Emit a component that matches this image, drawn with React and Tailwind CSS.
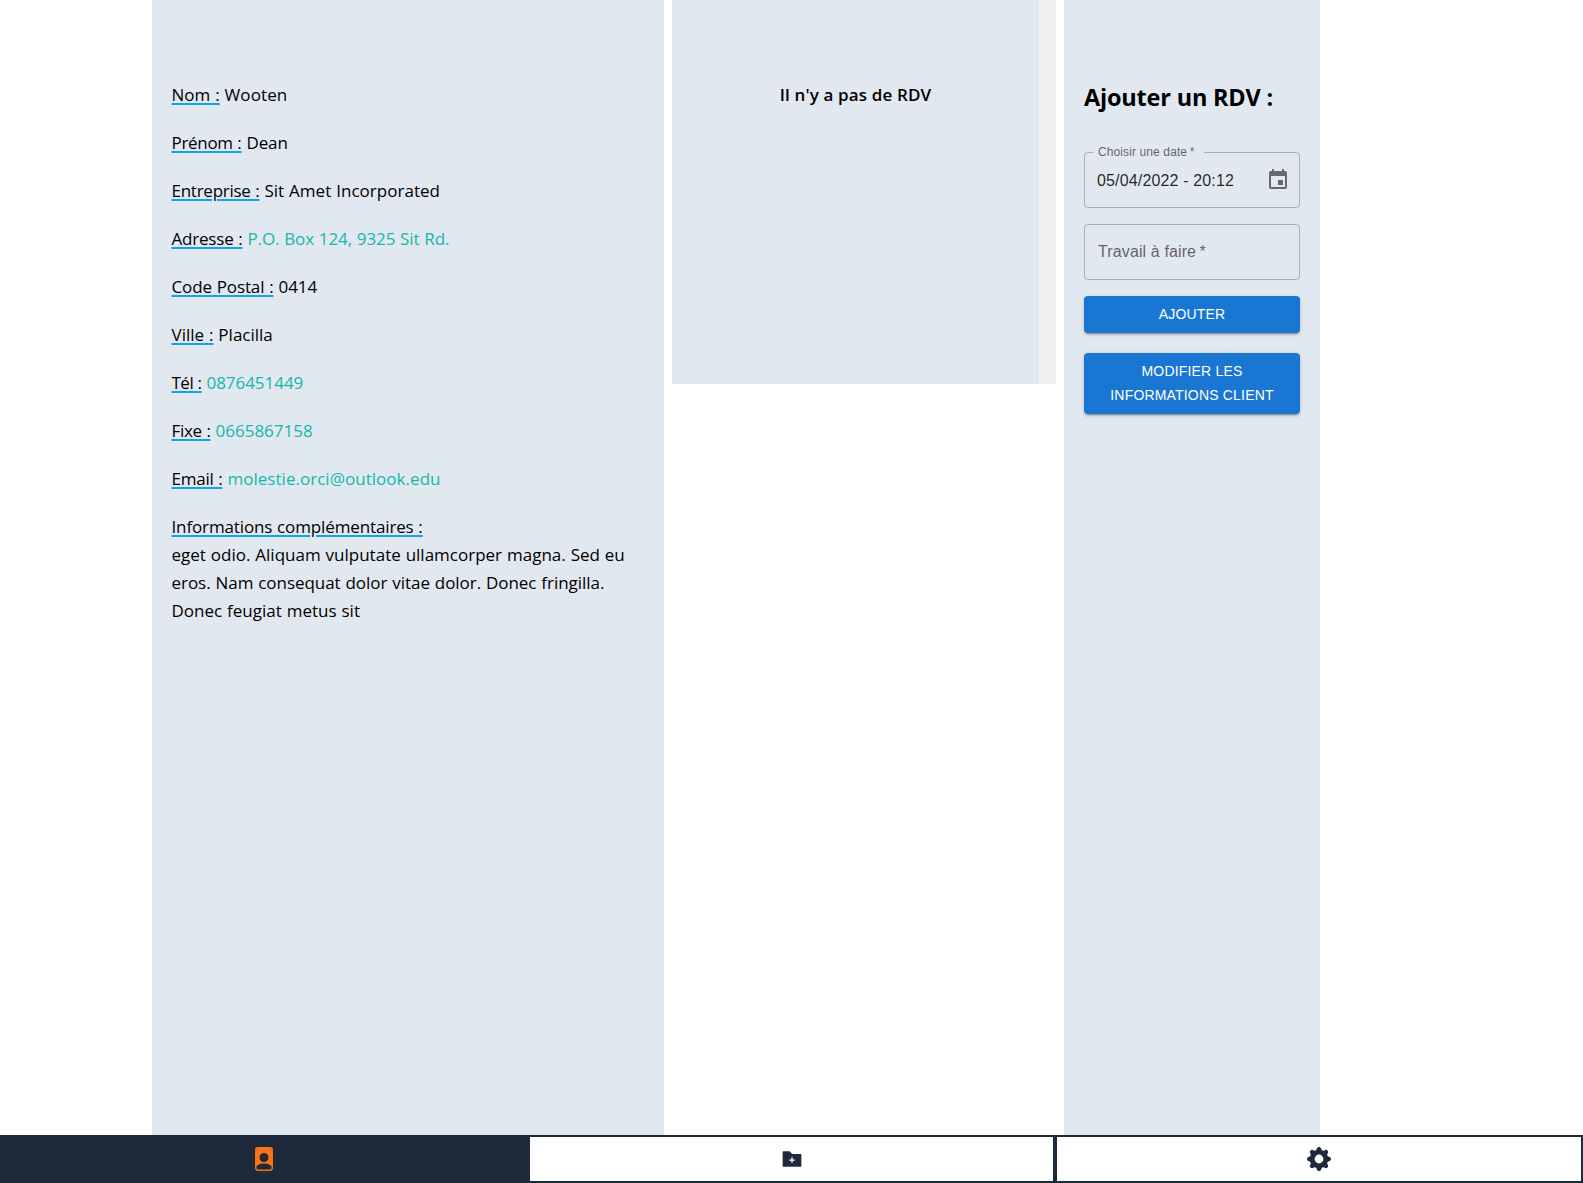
import React from "react";
import { BsFilePersonFill, BsGearFill } from "react-icons/bs";
import { AiFillFolderAdd } from "react-icons/ai";

const fields = [
  { label: "Nom :", value: "Wooten", labelClass: "tracking-normal", valueClass: "tracking-[0.1px]" },
  { label: "Prénom :", value: "Dean", labelClass: "tracking-[-0.31px]", valueClass: "tracking-[-0.1px]" },
  { label: "Entreprise :", value: "Sit Amet Incorporated", labelClass: "tracking-[-0.26px]", valueClass: "tracking-[0.02px]" },
  { label: "Adresse :", value: "P.O. Box 124, 9325 Sit Rd.", labelClass: "tracking-[-0.2px]", valueClass: "tracking-[-0.1px] text-[#14b8a6]" },
  { label: "Code Postal :", value: "0414", labelClass: "tracking-[-0.12px]", valueClass: "tracking-normal" },
  { label: "Ville :", value: "Placilla", labelClass: "tracking-normal", valueClass: "tracking-normal" },
  { label: "Tél :", value: "0876451449", labelClass: "tracking-[-0.5px]", valueClass: "tracking-[-0.05px] text-[#14b8a6]" },
  { label: "Fixe :", value: "0665867158", labelClass: "tracking-[-0.3px]", valueClass: "tracking-normal text-[#14b8a6]" },
  { label: "Email :", value: "molestie.orci@outlook.edu", labelClass: "tracking-[-0.23px]", valueClass: "tracking-[0.03px] text-[#14b8a6]" },
];

const labelBase = "underline decoration-[#0ea5e9] decoration-2 underline-offset-2 ";

function ClientInfo() {
  return (
    <section className="flex w-[512px] flex-col gap-5 bg-[#e2e8f0] pl-[19.5px] pt-[81px] text-[17px] leading-7 [word-spacing:0.5px]">
      {fields.map((f) => (
        <p key={f.label}>
          <span className={labelBase + f.labelClass}>{f.label}</span>{" "}
          <span className={f.valueClass}>{f.value}</span>
        </p>
      ))}
      <div>
        <p>
          <span className={labelBase + "tracking-[-0.13px]"}>Informations complémentaires :</span>
        </p>
        <p className="tracking-normal">
          eget odio. Aliquam vulputate ullamcorper magna. Sed eu
          <br />
          <span className="tracking-[-0.04px]">eros. Nam consequat dolor vitae dolor. Donec fringilla.</span>
          <br />
          Donec feugiat metus sit
        </p>
      </div>
    </section>
  );
}

function Appointments() {
  return (
    <section className="flex h-96 w-96 bg-[#e2e8f0]">
      <p className="flex-1 pt-[81px] text-center text-[17px] font-semibold leading-7 tracking-[0.14px]">
        Il n'y a pas de RDV
      </p>
      <div className="w-[17px] bg-[#f0f0f0]" />
    </section>
  );
}

const buttonClass =
  "rounded bg-[#1976d2] px-4 py-1.5 text-center text-sm uppercase leading-[24.5px] tracking-[0.18px] text-white shadow-[0_3px_1px_-2px_rgba(0,0,0,0.2),0_2px_2px_0_rgba(0,0,0,0.14),0_1px_5px_0_rgba(0,0,0,0.12)]";

function AppointmentForm() {
  return (
    <section className="w-64 bg-[#e2e8f0] px-5 pt-20">
      <h2 className="pt-px text-[23.5px] font-bold leading-8 tracking-[-0.2px]">Ajouter un RDV :</h2>
      <form className="mt-[39px] flex flex-col font-['Liberation_Sans',Arial,sans-serif]">
        <div className="relative flex h-14 items-center justify-between pl-[13px] pr-2.5">
          <fieldset className="pointer-events-none absolute inset-x-0 -top-[5px] bottom-0 rounded border border-black/25 px-2">
            <legend className="h-[11px] w-[111px]" />
          </fieldset>
          <label className="absolute left-3.5 -top-2 text-xs leading-4 tracking-[0.11px] text-black/60">
            Choisir une date<span>&thinsp;*</span>
          </label>
          <span className="whitespace-nowrap pt-0.5 text-base tracking-[0.15px] text-black/85">05/04/2022 - 20:12</span>
          <svg viewBox="0 0 24 24" className="h-6 w-6 shrink-0 fill-black/55">
            <path d="M17 12h-5v5h5v-5zM16 1v2H8V1H6v2H5c-1.11 0-1.99.9-1.99 2L3 19c0 1.1.89 2 2 2h14c1.1 0 2-.9 2-2V5c0-1.1-.9-2-2-2h-1V1h-2zm3 18H5V8h14v11z" />
          </svg>
        </div>
        <div className="mt-4 flex h-14 items-center rounded border border-black/25 px-[13px] text-base tracking-[0.12px] text-black/60">
          Travail à faire&thinsp;*
        </div>
        <button type="button" className={buttonClass + " mt-4"}>Ajouter</button>
        <button type="button" className={buttonClass + " mt-5"}>
          Modifier les
          <br />
          informations client
        </button>
      </form>
    </section>
  );
}

const tabBase = "flex flex-1 items-center justify-center border-2 border-[#1e293b] ";

export default function App() {
  return (
    <div className="flex h-[1183px] flex-col bg-white font-['Open_Sans','Noto_Sans',sans-serif] text-black">
      <main className="flex min-h-0 flex-1 gap-2 pl-[152px]">
        <ClientInfo />
        <Appointments />
        <AppointmentForm />
      </main>
      <nav className="flex h-12 text-2xl text-[#1e293b]">
        <a className={tabBase + "bg-[#1e293b] text-[#f97316]"}>
          <BsFilePersonFill />
        </a>
        <a className={tabBase}>
          <AiFillFolderAdd />
        </a>
        <a className={tabBase}>
          <BsGearFill />
        </a>
      </nav>
    </div>
  );
}
